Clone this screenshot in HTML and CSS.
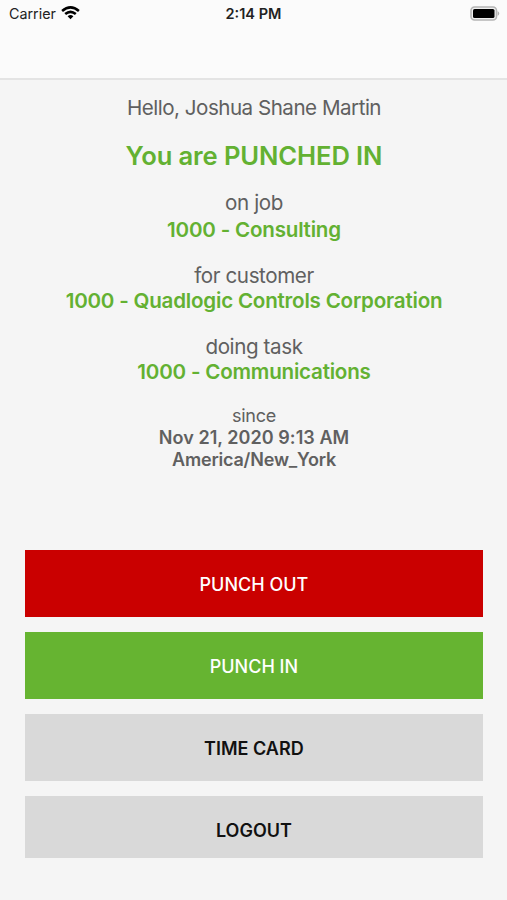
FILE: index.html
```html
<!DOCTYPE html>
<html lang="en">
<head>
<meta charset="utf-8">
<title>Time Clock</title>
<link rel="stylesheet" href="styles.css">
</head>
<body>
<header class="top">
  <div class="status">
    <div class="carrier"><span class="t carrier-name">Carrier</span>
      <svg class="wifi" width="19" height="14" viewBox="0 0 19 14"><g fill="none" stroke="#000" stroke-width="2.6"><path d="M1.1 4.9Q9.5 -2 17.9 4.9"/><path d="M4.2 8Q9.5 3.6 14.8 8"/></g><path d="M6.6 10.2Q9.5 7.8 12.4 10.2L9.5 13.3Z"/></svg>
    </div>
    <span class="t clock">2:14 PM</span>
    <svg class="battery" width="31" height="15" viewBox="0 0 31 15"><rect x="1" y="1" width="25.5" height="13" rx="3.5" fill="#f0f0f0" stroke="#b5b5b5" stroke-width="1.6"/><rect x="3" y="3" width="21.5" height="9" rx="1.6"/><path d="M27.6 5Q31 7.5 27.6 10Z" fill="#b0b0b0"/></svg>
  </div>
</header>
<main>
  <section class="info">
    <p class="hello"><span class="t">Hello, Joshua Shane Martin</span></p>
    <h1 class="state"><span class="t">You are PUNCHED IN</span></h1>
    <p class="label job"><span class="t">on job</span></p>
    <p class="value job-value"><span class="t">1000 - Consulting</span></p>
    <p class="label customer"><span class="t">for customer</span></p>
    <p class="value customer-value"><span class="t">1000 - Quadlogic Controls Corporation</span></p>
    <p class="label task"><span class="t">doing task</span></p>
    <p class="value task-value"><span class="t">1000 - Communications</span></p>
    <p class="since"><span class="t">since</span></p>
    <p class="date"><span class="t">Nov 21, 2020 9:13 AM</span></p>
    <p class="date zone"><span class="t">America/New_York</span></p>
  </section>
  <nav class="actions">
    <button class="out"><span class="t">PUNCH OUT</span></button>
    <button class="in"><span class="t">PUNCH IN</span></button>
    <button class="card"><span class="t">TIME CARD</span></button>
    <button class="logout"><span class="t">LOGOUT</span></button>
  </nav>
</main>
</body>
</html>
```
FILE: styles.css
```css
* { box-sizing: border-box; }
body { margin: 0; height: 900px; overflow: hidden; background: #f5f5f5; font-family: Inter, sans-serif; color: #606060; }
.t { display: inline-block; white-space: nowrap; }
.top { height: 80px; background: #fbfbfb; border-bottom: 2px solid #e4e4e4; }
.status { display: grid; grid-template-columns: 1fr auto 1fr; align-items: center; height: 27px; padding: 0 6px 0 9px; color: #222; }
.carrier { display: flex; align-items: center; gap: 5px; font-size: 14.3px; }
.wifi { margin-top: -1px; }
.clock { font-size: 14.5px; font-weight: 600; margin-left: -3px; }
.battery { justify-self: end; margin-top: -1px; }
.info { height: 470px; padding: 15px 0 0 1px; text-align: center; }
p, h1 { margin: 0; }
.hello { font-size: 20.6px; line-height: 26px; letter-spacing: -.5px; }
.state { margin-top: 19px; font-size: 25.6px; line-height: 32px; font-weight: 600; letter-spacing: -.12px; color: #63b132; }
.label { font-size: 20.6px; line-height: 26px; letter-spacing: -.4px; }
.value { font-size: 20.6px; line-height: 26px; font-weight: 600; letter-spacing: -.22px; color: #63b132; }
.job { margin-top: 18px; }
.job-value { margin-top: 1px; }
.customer, .task { margin-top: 20px; }
.customer-value, .task-value { margin-top: -1px; }
.since { margin-top: 20px; font-size: 18px; line-height: 22px; letter-spacing: -.3px; }
.date { font-size: 18px; line-height: 22px; font-weight: 600; letter-spacing: .05px; }
.zone { letter-spacing: -.2px; }
.actions { display: flex; flex-direction: column; gap: 15px; padding: .4px 24.5px 0 25.3px; }
button { height: 67px; padding: 3px 0 0; border: 0; font: 500 18px/22px Inter, sans-serif; color: #fff; }
.out { background: #ca0000; }
.in { background: #66b431; }
.card, .logout { background: #d9d9d9; color: #111; font-weight: 600; }
.logout { height: 62px; padding-top: 8px; }
```
